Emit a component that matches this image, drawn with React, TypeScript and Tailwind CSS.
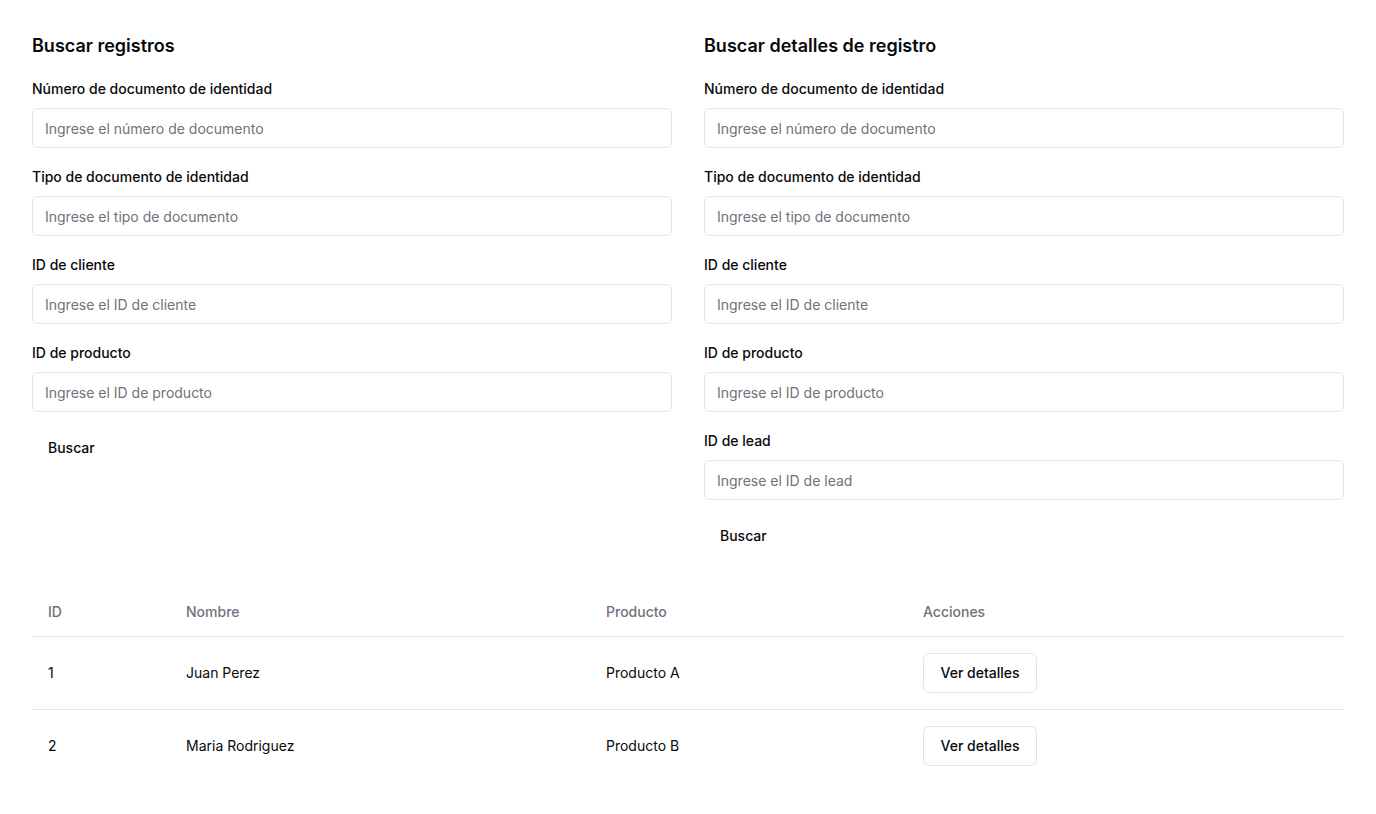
import React from "react"

const Field = ({ label, placeholder }: { label: string; placeholder: string }) => (
    <div className="flex flex-col">
        <label className="text-sm leading-6 font-medium text-[#09090b] mt-px mb-[7px]">{label}</label>
        <input
            placeholder={placeholder}
            className="h-10 w-full rounded-md border border-[#e4e4e7] bg-white px-3 text-sm text-[#09090b] placeholder:text-[#71717a] outline-none"
        />
    </div>
)

const rows = [
    { id: 1, nombre: "Juan Perez", producto: "Producto A" },
    { id: 2, nombre: "Maria Rodriguez", producto: "Producto B" },
]

export default function App() {
    return (
        <main className="min-h-screen bg-white p-8 font-['Inter',sans-serif] text-[#09090b]">
            <div className="grid grid-cols-2 gap-8">
                <section>
                    <h2 className="text-lg leading-7 font-semibold mb-4">Buscar registros</h2>
                    <div className="flex flex-col gap-4">
                        <Field label="Número de documento de identidad" placeholder="Ingrese el número de documento" />
                        <Field label="Tipo de documento de identidad" placeholder="Ingrese el tipo de documento" />
                        <Field label="ID de cliente" placeholder="Ingrese el ID de cliente" />
                        <Field label="ID de producto" placeholder="Ingrese el ID de producto" />
                    </div>
                    <button className="mt-4 h-10 px-4 rounded-md text-sm font-medium">Buscar</button>
                </section>
                <section>
                    <h2 className="text-lg leading-7 font-semibold mb-4">Buscar detalles de registro</h2>
                    <div className="flex flex-col gap-4">
                        <Field label="Número de documento de identidad" placeholder="Ingrese el número de documento" />
                        <Field label="Tipo de documento de identidad" placeholder="Ingrese el tipo de documento" />
                        <Field label="ID de cliente" placeholder="Ingrese el ID de cliente" />
                        <Field label="ID de producto" placeholder="Ingrese el ID de producto" />
                        <Field label="ID de lead" placeholder="Ingrese el ID de lead" />
                    </div>
                    <button className="mt-4 h-10 px-4 rounded-md text-sm font-medium">Buscar</button>
                </section>
            </div>

            <table className="mt-8 w-full table-fixed text-sm">
                <thead>
                    <tr className="border-b border-[#e4e4e7]">
                        <th className="h-12 w-[138px] px-4 text-left font-medium text-[#71717a]">ID</th>
                        <th className="h-12 w-[420px] px-4 text-left font-medium text-[#71717a]">Nombre</th>
                        <th className="h-12 w-[317px] px-4 text-left font-medium text-[#71717a]">Producto</th>
                        <th className="h-12 px-4 text-left font-medium text-[#71717a]">Acciones</th>
                    </tr>
                </thead>
                <tbody>
                    {rows.map((r, i) => (
                        <tr key={r.id} className={i < rows.length - 1 ? "border-b border-[#e4e4e7]" : ""}>
                            <td className="p-4">{r.id}</td>
                            <td className="p-4">{r.nombre}</td>
                            <td className="p-4">{r.producto}</td>
                            <td className="p-4">
                                <button className="h-10 w-[114px] rounded-md border border-[#e4e4e7] bg-white text-sm font-medium">
                                    Ver detalles
                                </button>
                            </td>
                        </tr>
                    ))}
                </tbody>
            </table>
        </main>
    )
}
